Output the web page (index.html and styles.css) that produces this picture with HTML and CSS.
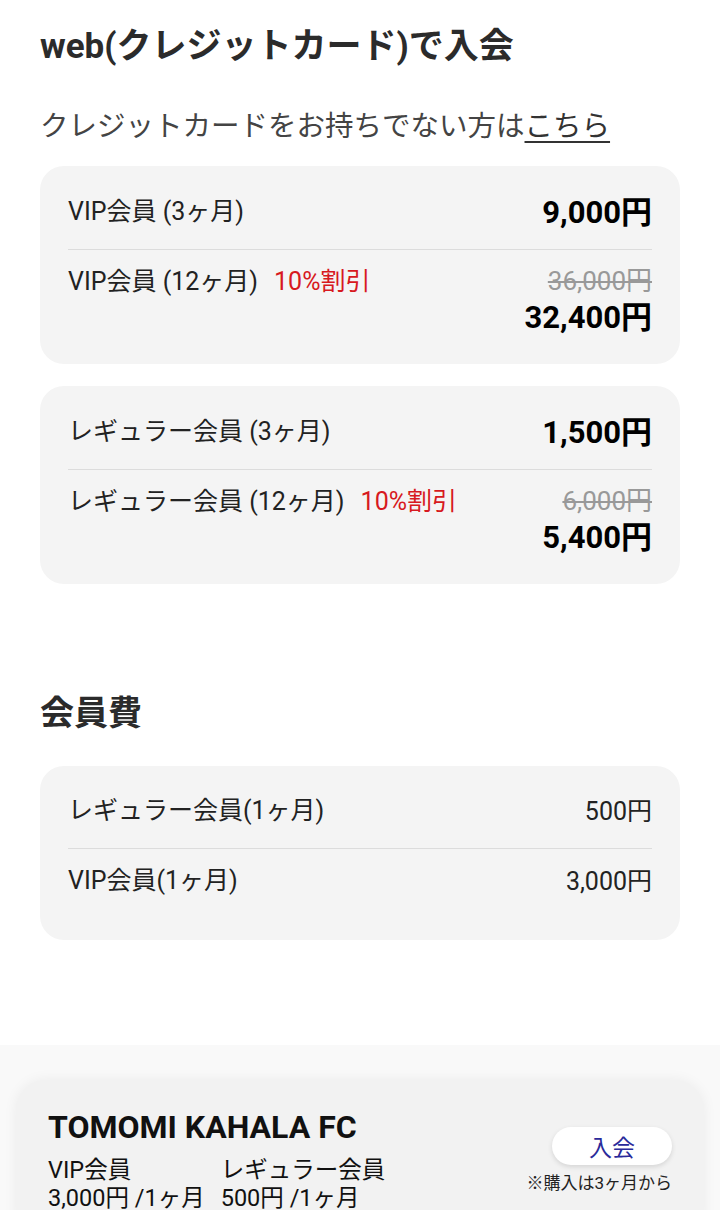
FILE: index.html
```html
<!DOCTYPE html>
<html lang="ja">
<head>
  <meta charset="UTF-8">
  <title>入会</title>
  <link rel="stylesheet" href="styles.css">
</head>
<body>
  <main class="page">
    <h1 class="title">web(クレジットカード)で入会</h1>
    <p class="lead">クレジットカードをお持ちでない方は<a href="#">こちら</a></p>

    <section class="card">
      <div class="row">
        <span class="label">VIP会員 (3ヶ月)</span>
        <span class="price">9,000円</span>
      </div>
      <div class="row">
        <span class="label">VIP会員 (12ヶ月)<em class="off">10%割引</em></span>
        <span class="prices">
          <s class="old">36,000円</s>
          <span class="price">32,400円</span>
        </span>
      </div>
    </section>

    <section class="card">
      <div class="row">
        <span class="label">レギュラー会員 (3ヶ月)</span>
        <span class="price">1,500円</span>
      </div>
      <div class="row">
        <span class="label">レギュラー会員 (12ヶ月)<em class="off">10%割引</em></span>
        <span class="prices">
          <s class="old">6,000円</s>
          <span class="price">5,400円</span>
        </span>
      </div>
    </section>

    <h2 class="title sub">会員費</h2>

    <section class="card fees">
      <div class="row">
        <span class="label">レギュラー会員(1ヶ月)</span>
        <span class="fee">500円</span>
      </div>
      <div class="row">
        <span class="label">VIP会員(1ヶ月)</span>
        <span class="fee">3,000円</span>
      </div>
    </section>
  </main>

  <footer class="bar">
    <div class="join">
      <div class="join-info">
        <h3>TOMOMI KAHALA FC</h3>
        <div class="plans">
          <p>VIP会員<br>3,000円 /1ヶ月</p>
          <p>レギュラー会員<br>500円 /1ヶ月</p>
        </div>
      </div>
      <div class="join-action">
        <button>入会</button>
        <small>※購入は3ヶ月から</small>
      </div>
    </div>
  </footer>
</body>
</html>
```

FILE: styles.css
```css
body {
  margin: 0;
  font-family: Roboto, "Noto Sans CJK JP", sans-serif;
  color: #222;
  background: #fff;
}

.page {
  padding: 0 40px;
}

.title {
  margin: 24px 0 0;
  font-size: 35px;
  line-height: 46px;
  font-weight: 700;
  color: #2b2b2b;
}

.title.sub {
  margin-top: 106px;
  font-size: 34px;
}

.lead {
  margin: 37px 0 0;
  font-size: 28.5px;
  line-height: 40px;
  color: #444;
}

.lead a {
  color: #333;
  text-decoration: underline;
  text-underline-offset: 5px;
}

.card {
  margin-top: 19px;
  padding: 12px 28px 28px;
  background: #f4f4f4;
  border-radius: 24px;
}

.card + .card {
  margin-top: 22px;
}

.fees {
  margin-top: 30px;
  padding-top: 11px;
  padding-bottom: 37px;
}

.row {
  display: flex;
  justify-content: space-between;
  align-items: flex-start;
  padding: 14px 0 15px;
  border-bottom: 1px solid #dcdcdc;
}

.row + .row {
  padding: 12px 0 0;
  border-bottom: none;
}

.label {
  font-size: 25px;
  line-height: 40px;
  color: #222;
}

.off {
  margin-left: 16px;
  font-style: normal;
  color: #d71920;
}

.prices {
  display: flex;
  flex-direction: column;
  align-items: flex-end;
}

.price {
  font-size: 31px;
  line-height: 42px;
  font-weight: 700;
  color: #000;
}

.prices .price {
  line-height: 36px;
}

.old {
  font-size: 26px;
  line-height: 38px;
  color: #999;
}

.fee {
  font-size: 25px;
  line-height: 42px;
  color: #222;
}

.bar {
  margin-top: 105px;
  padding: 35px 16px 0;
  background: #f9f9f9;
}

.join {
  display: flex;
  justify-content: space-between;
  padding: 29px 32px 30px;
  background: #f2f2f2;
  border-radius: 30px;
  box-shadow: 0 0 14px rgba(0, 0, 0, 0.06);
}

.join h3 {
  margin: 0;
  font-size: 32px;
  line-height: 36px;
  font-weight: 700;
  color: #111;
}

.plans {
  display: flex;
  gap: 16px;
  margin-top: 11px;
}

.plans p {
  margin: 0;
  font-size: 23.5px;
  line-height: 28px;
  color: #111;
}

.join-action {
  display: flex;
  flex-direction: column;
  align-items: flex-end;
  gap: 6px;
  padding-top: 18px;
}

.join-action button {
  width: 120px;
  height: 38px;
  border: none;
  border-radius: 19px;
  background: #fff;
  color: #2a2a9a;
  font-family: inherit;
  font-size: 23px;
  box-shadow: 0 2px 5px rgba(0, 0, 0, 0.12);
}

.join-action small {
  font-size: 17px;
  line-height: 24px;
  color: #222;
}
```
